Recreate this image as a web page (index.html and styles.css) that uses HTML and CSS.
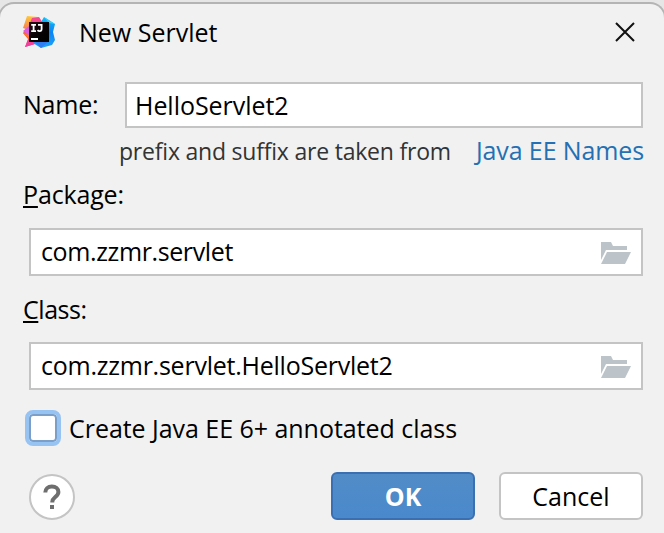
FILE: index.html
```
<!DOCTYPE html>
<html lang="en">
<head>
<meta charset="utf-8">
<title>New Servlet</title>
<link rel="stylesheet" href="styles.css">
</head>
<body>
<main class="dialog">
  <header class="titlebar">
    <svg class="logo" width="34" height="34" viewBox="0 0 34 34" aria-hidden="true">
      <defs>
        <linearGradient id="warm" x1="0" y1="0" x2="0" y2="1">
          <stop offset="0" stop-color="#fdc83c"/><stop offset=".35" stop-color="#f98a4a"/><stop offset=".55" stop-color="#fa5a3c"/><stop offset="1" stop-color="#f5389c"/>
        </linearGradient>
        <linearGradient id="cool" x1="0" y1="0" x2="0" y2="1">
          <stop offset="0" stop-color="#12bdf8"/><stop offset=".5" stop-color="#0a84f5"/><stop offset="1" stop-color="#1ea5fa"/>
        </linearGradient>
        <linearGradient id="tile" x1="0" y1="0" x2="1" y2="1">
          <stop offset="0" stop-color="#2a0c14"/><stop offset=".5" stop-color="#080205"/><stop offset="1" stop-color="#000"/>
        </linearGradient>
      </defs>
      <path fill="url(#warm)" d="M5 1 16 2 20 8 16 28 3 32 6 24 1 18 4 14 1 13z"/>
      <path fill="#f7488e" d="M10 3 17 2 21 8H8z"/>
      <path fill="#d95be0" d="M1 16 7 11V21z"/>
      <path fill="#ff7a1a" d="M1 18 7 20V24z"/>
      <path fill="#f0409c" d="M3 32 6 25H18L13 29z"/>
      <path fill="url(#cool)" d="M19 7 22 2 33 9 31 17 33 25 30 30 19 33 11 28 18 24z"/>
      <path fill="#35d0fb" d="M22 2 33 9 27 8z"/>
      <path fill="#2f7df0" d="M13 27H26L19 33z"/>
      <path fill="url(#tile)" d="M7 7h20v20H7z"/>
      <path fill="none" stroke="#fff" stroke-width="1.8" d="M9.2 9.900h4.800M11.600 9.500v7M9.200 16.100h4.800M16 9.900h3.600v4.200c0 1.500-.7 2.100-1.900 2.100-1 0-1.600-.3-2.200-1M9 24h7"/>
    </svg>
    <h1 class="title">New Servlet</h1>
    <svg class="close" width="20" height="20" viewBox="0 0 20 20" aria-label="Close"><path d="M1 1 19 19M19 1 1 19" fill="none" stroke="#111" stroke-width="2"/></svg>
  </header>

  <div class="name-row">
    <label class="name-label">Name:</label>
    <div class="field name-field">HelloServlet2</div>
  </div>
  <div class="hint-row">
    <span class="hint">prefix and suffix are taken from</span>
    <a class="link">Java EE Names</a>
  </div>

  <label class="label package-label"><span class="mnemonic">P</span>ackage:</label>
  <div class="field path-field package-field">
    <span class="package-value">com.zzmr.servlet</span>
    <svg class="folder" width="30" height="22" viewBox="0 0 30 22"><path fill="#bdc4c9" d="M0 0h10l2 4h14v4H5L0 18zM6 10h24l-6 12H0z"/></svg>
  </div>

  <label class="label class-label"><span class="mnemonic">C</span>lass:</label>
  <div class="field path-field class-field">
    <span class="class-value">com.zzmr.servlet.HelloServlet2</span>
    <svg class="folder" width="30" height="22" viewBox="0 0 30 22"><path fill="#bdc4c9" d="M0 0h10l2 4h14v4H5L0 18zM6 10h24l-6 12H0z"/></svg>
  </div>

  <div class="check-row">
    <span class="checkbox"></span>
    <span class="check-text">Create Java EE 6+ annotated class</span>
  </div>

  <footer class="actions">
    <svg class="help" width="46" height="46" viewBox="0 0 46 46" aria-label="Help">
      <circle cx="23" cy="23" r="22" fill="#fff" stroke="#c4c4c4" stroke-width="2"/>
      <path d="M16.300 18.600c0-3.700 2.600-6 6.600-6 3.900 0 6.500 2.100 6.500 5.400 0 4.800-6.100 5.300-6.100 9.800v.7" fill="none" stroke="#6e6e6e" stroke-width="4"/>
      <path d="M21 31h4v4h-4z" fill="#6e6e6e"/>
    </svg>
    <div class="button primary">OK</div>
    <div class="button">Cancel</div>
  </footer>
</main>
</body>
</html>
```
FILE: styles.css
```
* { box-sizing: border-box; }

body {
  margin: 0;
  height: 533px;
  overflow: hidden;
  background: #e6e6e6;
  color: #000;
  font: 25px/34px "Open Sans", "Noto Sans", sans-serif;
  white-space: nowrap;
}

.dialog {
  display: flex;
  flex-direction: column;
  height: 531px;
  margin: 2px -2px 0;
  padding: 0 23px 0 25px;
  border: 2px solid #b4b4b4;
  border-bottom: 0;
  border-radius: 16px 16px 0 0;
  background: #f1f1f1;
}

.titlebar {
  display: flex;
  align-items: center;
  height: 58px;
  padding-right: 5px;
  margin-left: -3px;
}

.logo { flex: none; margin-top: -2px; }

.title {
  flex: 1;
  margin: -2px 0 0 23px;
  font-size: 25px;
  font-weight: 400;
}

.close { margin: -2px 1px 0 0; }

.name-row {
  display: flex;
  height: 46px;
  margin-top: 20px;
  margin-right: -2px;
}

.name-label {
  width: 102px;
  padding-top: 5px;
  margin-left: -2px;
  letter-spacing: -.2px;
}

.field {
  display: flex;
  align-items: center;
  border: 2px solid #c4c4c4;
  background: #fff;
}

.name-field { flex: 1; padding: 0 0 1px 8px; letter-spacing: -.05px; }

.hint-row {
  display: flex;
  justify-content: space-between;
  height: 34px;
  margin: 6px -3px 0 94px;
  line-height: 34px;
}

.hint { color: #333; font-size: 23px; letter-spacing: -.21px; }

.link { color: #2470b3; margin-top: -1px; letter-spacing: -.12px; }

.label { height: 34px; margin-left: -2px; }

.package-label { margin-top: 9px; letter-spacing: -.15px; }

.class-label { margin-top: 16px; letter-spacing: -.45px; }

.mnemonic {
  text-decoration: underline 2px;
  text-underline-offset: 2px;
  text-decoration-skip-ink: none;
}

.path-field {
  justify-content: space-between;
  height: 48px;
  margin: 0 -2px 0 4px;
  padding: 0 10px 3px 10px;
}

.package-field { margin-top: 17px; }

.class-field { margin-top: 16px; }

.package-value { letter-spacing: -.38px; }

.class-value { letter-spacing: -.24px; }

.folder { margin-top: 5px; }

.check-row {
  display: flex;
  align-items: center;
  gap: 8px;
  height: 36px;
  margin-top: 20px;
}

.check-text { letter-spacing: -.04px; }

.checkbox {
  width: 36px;
  height: 36px;
  border: 4px solid #97c3f3;
  border-radius: 8px;
  background: #fff;
  box-shadow: inset 0 0 0 2px #7b9fc8;
}

.actions {
  display: flex;
  gap: 24px;
  height: 48px;
  margin: 26px -2px 0 3.5px;
}

.help { margin: 1.5px auto 0 0; }

.button {
  width: 144px;
  height: 48px;
  border: 2px solid #c4c4c4;
  border-radius: 6px;
  background: #fff;
  line-height: 45px;
  text-align: center;
}

.primary {
  border-color: #3a70b2;
  background: linear-gradient(#528cc7, #4989cc);
  color: #fff;
  font-weight: 700;
}
```
